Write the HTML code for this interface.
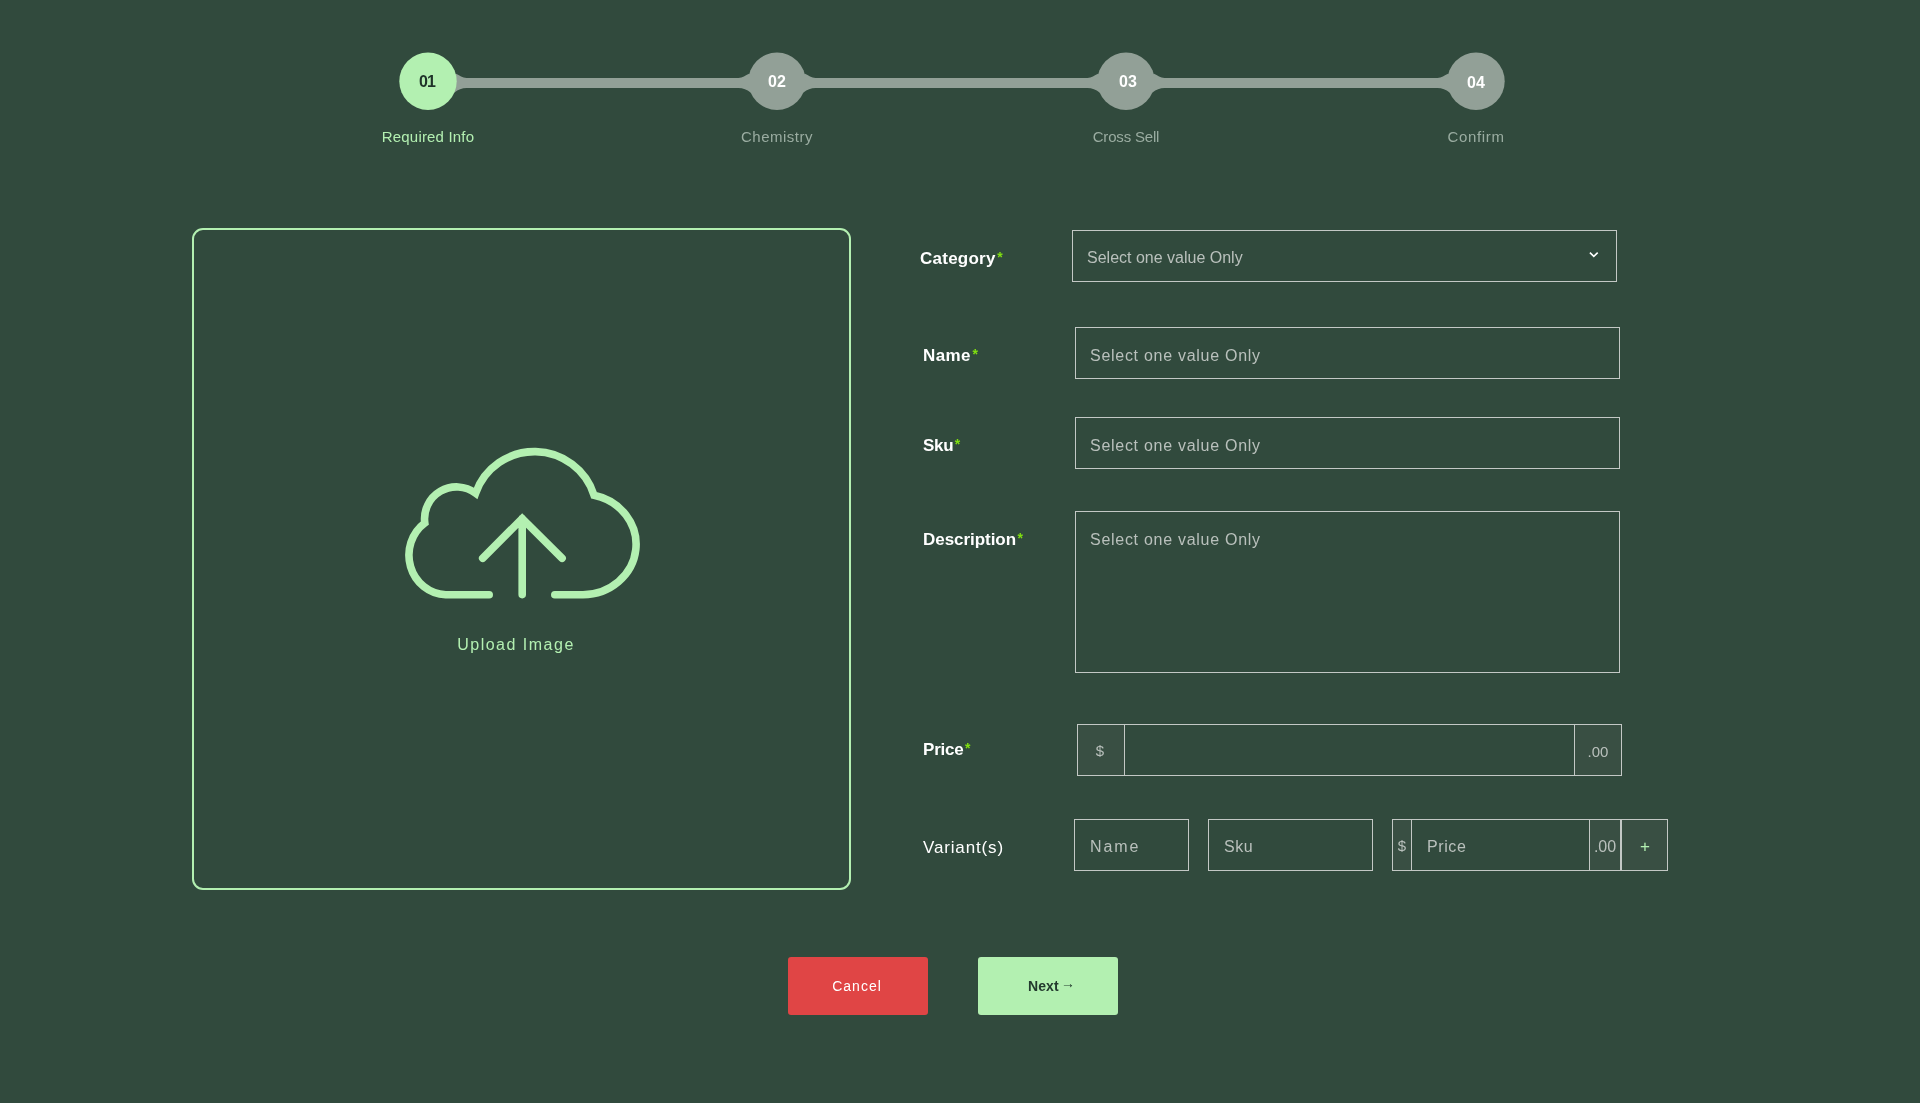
<!DOCTYPE html>
<html><head><meta charset="utf-8"><title>Required Info</title>
<style>
html,body{margin:0;padding:0;}
body{width:1920px;height:1103px;background:#314a3d;position:relative;overflow:hidden;font-family:"Liberation Sans",sans-serif;}
</style></head><body>
<svg style="position:absolute;left:0;top:0" width="1920" height="130" viewBox="0 0 1920 130">
<rect x="428" y="78" width="1048" height="10" fill="#92a097"/>
<path d="M443,81.3 L456,73.8 C459.5,75.2 462.5,78 466.5,78 L466.5,88 C462,88 458,89.5 454.5,92.6 L443,81.3 Z" fill="#92a097"/>
<path d="M792,81.3 L805,73.8 C808.5,75.2 811.5,78 815.5,78 L815.5,88 C811,88 807,89.5 803.5,92.6 L792,81.3 Z" fill="#92a097"/>
<path d="M762,81.3 L749,73.8 C745.5,75.2 742.5,78 738.5,78 L738.5,88 C743,88 747,89.5 750.5,92.6 L762,81.3 Z" fill="#92a097"/>
<path d="M1141,81.3 L1154,73.8 C1157.5,75.2 1160.5,78 1164.5,78 L1164.5,88 C1160,88 1156,89.5 1152.5,92.6 L1141,81.3 Z" fill="#92a097"/>
<path d="M1111,81.3 L1098,73.8 C1094.5,75.2 1091.5,78 1087.5,78 L1087.5,88 C1092,88 1096,89.5 1099.5,92.6 L1111,81.3 Z" fill="#92a097"/>
<path d="M1461,81.3 L1448,73.8 C1444.5,75.2 1441.5,78 1437.5,78 L1437.5,88 C1442,88 1446,89.5 1449.5,92.6 L1461,81.3 Z" fill="#92a097"/>
<circle cx="428" cy="81.3" r="28.7" fill="#b3f0b1"/>
<circle cx="777" cy="81.3" r="28.7" fill="#92a097"/>
<circle cx="1126" cy="81.3" r="28.7" fill="#92a097"/>
<circle cx="1476" cy="81.3" r="28.7" fill="#92a097"/>
</svg>
<div style="position:absolute;will-change:transform;top:74.46px;font-size:16px;line-height:16px;color:#1f3329;font-weight:700;letter-spacing:0px;white-space:nowrap;left:419.20px;">0</div>
<div style="position:absolute;will-change:transform;top:74.46px;font-size:16px;line-height:16px;color:#1f3329;font-weight:700;letter-spacing:0px;white-space:nowrap;left:427.30px;">1</div>
<div style="position:absolute;will-change:transform;top:74.36px;font-size:16px;line-height:16px;color:#ffffff;font-weight:700;letter-spacing:0px;white-space:nowrap;left:277.00px;width:1000px;text-align:center;">02</div>
<div style="position:absolute;will-change:transform;top:74.36px;font-size:16px;line-height:16px;color:#ffffff;font-weight:700;letter-spacing:0px;white-space:nowrap;left:628.20px;width:1000px;text-align:center;">03</div>
<div style="position:absolute;will-change:transform;top:75.26px;font-size:16px;line-height:16px;color:#ffffff;font-weight:700;letter-spacing:0px;white-space:nowrap;left:976.40px;width:1000px;text-align:center;">04</div>
<div style="position:absolute;will-change:transform;top:129.20px;font-size:15px;line-height:15px;color:#b3f0b1;font-weight:400;letter-spacing:0.18px;white-space:nowrap;left:-71.70px;width:1000px;text-align:center;">Required Info</div>
<div style="position:absolute;will-change:transform;top:129.20px;font-size:15px;line-height:15px;color:#9aaca1;font-weight:400;letter-spacing:0.5px;white-space:nowrap;left:276.80px;width:1000px;text-align:center;">Chemistry</div>
<div style="position:absolute;will-change:transform;top:129.20px;font-size:15px;line-height:15px;color:#9aaca1;font-weight:400;letter-spacing:-0.18px;white-space:nowrap;left:625.80px;width:1000px;text-align:center;">Cross Sell</div>
<div style="position:absolute;will-change:transform;top:129.20px;font-size:15px;line-height:15px;color:#9aaca1;font-weight:400;letter-spacing:0.65px;white-space:nowrap;left:975.70px;width:1000px;text-align:center;">Confirm</div>
<div style="position:absolute;left:192px;top:228px;width:659px;height:662px;box-sizing:border-box;border:2px solid #b3f0b1;background:transparent;border-radius:11px;"></div>
<svg style="position:absolute;left:0;top:0" width="1920" height="1103" viewBox="0 0 1920 1103"><g fill="none" stroke="#b3f0b1" stroke-width="7.6" stroke-linecap="round" stroke-linejoin="miter"><path d="M489.2,594.7 L445.7,594.7 A38.2,39.6 0 0 1 424.8,523 A32,32 0 0 1 475.6,493.2 A62.5,62.5 0 0 1 594.1,495.3 A53.6,50.3 0 0 1 583,594.7 L554.8,594.7"/><path d="M482.7,558.2 L522.2,518.5 L562.1,558.2 M522.2,518.5 L522.2,594.6"/></g></svg>
<div style="position:absolute;will-change:transform;top:636.86px;font-size:16px;line-height:16px;color:#b3f0b1;font-weight:400;letter-spacing:1.5px;white-space:nowrap;left:15.50px;width:1000px;text-align:center;">Upload Image</div>
<div style="position:absolute;will-change:transform;top:249.81px;font-size:17px;line-height:17px;color:#ffffff;font-weight:700;letter-spacing:0.25px;white-space:nowrap;left:920.00px;">Category<span style="color:#80e010;font-size:14px;margin-left:1.5px;position:relative;top:-2.2px">*</span></div>
<div style="position:absolute;will-change:transform;top:347.31px;font-size:17px;line-height:17px;color:#ffffff;font-weight:700;letter-spacing:0.4px;white-space:nowrap;left:923.00px;">Name<span style="color:#80e010;font-size:14px;margin-left:1.5px;position:relative;top:-2.2px">*</span></div>
<div style="position:absolute;will-change:transform;top:437.31px;font-size:17px;line-height:17px;color:#ffffff;font-weight:700;letter-spacing:-0.3px;white-space:nowrap;left:923.00px;">Sku<span style="color:#80e010;font-size:14px;margin-left:1.5px;position:relative;top:-2.2px">*</span></div>
<div style="position:absolute;will-change:transform;top:531.11px;font-size:17px;line-height:17px;color:#ffffff;font-weight:700;letter-spacing:-0.05px;white-space:nowrap;left:923.00px;">Description<span style="color:#80e010;font-size:14px;margin-left:1.5px;position:relative;top:-2.2px">*</span></div>
<div style="position:absolute;will-change:transform;top:741.21px;font-size:17px;line-height:17px;color:#ffffff;font-weight:700;letter-spacing:-0.2px;white-space:nowrap;left:923.00px;">Price<span style="color:#80e010;font-size:14px;margin-left:1.5px;position:relative;top:-2.2px">*</span></div>
<div style="position:absolute;will-change:transform;top:838.61px;font-size:17px;line-height:17px;color:#ffffff;font-weight:400;letter-spacing:0.85px;white-space:nowrap;left:923.00px;">Variant(s)</div>
<div style="position:absolute;left:1072px;top:230px;width:545px;height:52px;box-sizing:border-box;border:1px solid #c3c8c5;background:transparent;border-radius:0px;"></div>
<div style="position:absolute;will-change:transform;top:250.36px;font-size:16px;line-height:16px;color:#b9c0bc;font-weight:400;letter-spacing:0px;white-space:nowrap;left:1086.60px;">Select one value Only</div>
<svg style="position:absolute;left:1588px;top:251px" width="12" height="8" viewBox="0 0 12 8"><path d="M1.9,1.6 L5.8,5.4 L9.7,1.6" fill="none" stroke="#ffffff" stroke-width="1.6"/></svg>
<div style="position:absolute;left:1075px;top:327px;width:545px;height:52px;box-sizing:border-box;border:1px solid #c3c8c5;background:transparent;border-radius:0px;"></div>
<div style="position:absolute;will-change:transform;top:347.56px;font-size:16px;line-height:16px;color:#b9c0bc;font-weight:400;letter-spacing:0.72px;white-space:nowrap;left:1089.80px;">Select one value Only</div>
<div style="position:absolute;left:1075px;top:417px;width:545px;height:52px;box-sizing:border-box;border:1px solid #c3c8c5;background:transparent;border-radius:0px;"></div>
<div style="position:absolute;will-change:transform;top:437.56px;font-size:16px;line-height:16px;color:#b9c0bc;font-weight:400;letter-spacing:0.72px;white-space:nowrap;left:1089.80px;">Select one value Only</div>
<div style="position:absolute;left:1075px;top:511px;width:545px;height:162px;box-sizing:border-box;border:1px solid #c3c8c5;background:transparent;border-radius:0px;"></div>
<div style="position:absolute;will-change:transform;top:531.56px;font-size:16px;line-height:16px;color:#b9c0bc;font-weight:400;letter-spacing:0.72px;white-space:nowrap;left:1089.80px;">Select one value Only</div>
<div style="position:absolute;left:1077px;top:724px;width:545px;height:52px;box-sizing:border-box;border:1px solid #c3c8c5;background:transparent;border-radius:0px;"></div>
<div style="position:absolute;left:1077px;top:724px;width:48px;height:52px;box-sizing:border-box;border:1px solid #c3c8c5;background:#394f43;border-radius:0px;"></div>
<div style="position:absolute;left:1574px;top:724px;width:48px;height:52px;box-sizing:border-box;border:1px solid #c3c8c5;background:#394f43;border-radius:0px;"></div>
<div style="position:absolute;will-change:transform;top:743.30px;font-size:15px;line-height:15px;color:#b9c0bc;font-weight:400;letter-spacing:0px;white-space:nowrap;left:600.40px;width:1000px;text-align:center;">$</div>
<div style="position:absolute;will-change:transform;top:744.30px;font-size:15px;line-height:15px;color:#b9c0bc;font-weight:400;letter-spacing:0px;white-space:nowrap;left:1098.00px;width:1000px;text-align:center;">.00</div>
<div style="position:absolute;left:1074px;top:819px;width:115px;height:52px;box-sizing:border-box;border:1px solid #c3c8c5;background:transparent;border-radius:0px;"></div>
<div style="position:absolute;will-change:transform;top:839.46px;font-size:16px;line-height:16px;color:#b9c0bc;font-weight:400;letter-spacing:1.9px;white-space:nowrap;left:1090.00px;">Name</div>
<div style="position:absolute;left:1208px;top:819px;width:165px;height:52px;box-sizing:border-box;border:1px solid #c3c8c5;background:transparent;border-radius:0px;"></div>
<div style="position:absolute;will-change:transform;top:839.46px;font-size:16px;line-height:16px;color:#b9c0bc;font-weight:400;letter-spacing:0.6px;white-space:nowrap;left:1224.00px;">Sku</div>
<div style="position:absolute;left:1392px;top:819px;width:276px;height:52px;box-sizing:border-box;border:1px solid #c3c8c5;background:transparent;border-radius:0px;"></div>
<div style="position:absolute;left:1392px;top:819px;width:20px;height:52px;box-sizing:border-box;border:1px solid #c3c8c5;background:#394f43;border-radius:0px;"></div>
<div style="position:absolute;left:1589px;top:819px;width:33px;height:52px;box-sizing:border-box;border:1px solid #c3c8c5;background:#394f43;border-radius:0px;"></div>
<div style="position:absolute;left:1620px;top:819px;width:48px;height:52px;box-sizing:border-box;border:1px solid #c3c8c5;background:#394f43;border-radius:0px;border-left-width:2px;"></div>
<div style="position:absolute;will-change:transform;top:838.30px;font-size:15px;line-height:15px;color:#b9c0bc;font-weight:400;letter-spacing:0px;white-space:nowrap;left:902.00px;width:1000px;text-align:center;">$</div>
<div style="position:absolute;will-change:transform;top:839.46px;font-size:16px;line-height:16px;color:#b9c0bc;font-weight:400;letter-spacing:0.6px;white-space:nowrap;left:1426.50px;">Price</div>
<div style="position:absolute;will-change:transform;top:838.96px;font-size:16px;line-height:16px;color:#b9c0bc;font-weight:400;letter-spacing:0px;white-space:nowrap;left:1104.70px;width:1000px;text-align:center;">.00</div>
<div style="position:absolute;will-change:transform;top:837.61px;font-size:17px;line-height:17px;color:#b3f0b1;font-weight:400;letter-spacing:0px;white-space:nowrap;left:1144.50px;width:1000px;text-align:center;">+</div>
<div style="position:absolute;left:788px;top:957px;width:140px;height:58px;box-sizing:border-box;border:0px solid #e04545;background:#e04545;border-radius:3px;"></div>
<div style="position:absolute;will-change:transform;top:979.15px;font-size:14px;line-height:14px;color:#ffffff;font-weight:400;letter-spacing:1.0px;white-space:nowrap;left:356.70px;width:1000px;text-align:center;">Cancel</div>
<div style="position:absolute;left:978px;top:957px;width:140px;height:58px;box-sizing:border-box;border:0px solid #b3f0b1;background:#b3f0b1;border-radius:3px;"></div>
<div style="position:absolute;will-change:transform;top:979.15px;font-size:14px;line-height:14px;color:#233a2e;font-weight:700;letter-spacing:0.1px;white-space:nowrap;left:1027.50px;">Next</div>
<div style="position:absolute;will-change:transform;top:975.95px;font-size:14px;line-height:14px;color:#233a2e;font-weight:400;letter-spacing:0px;white-space:nowrap;left:1061.20px;">&rarr;</div>
</body></html>
